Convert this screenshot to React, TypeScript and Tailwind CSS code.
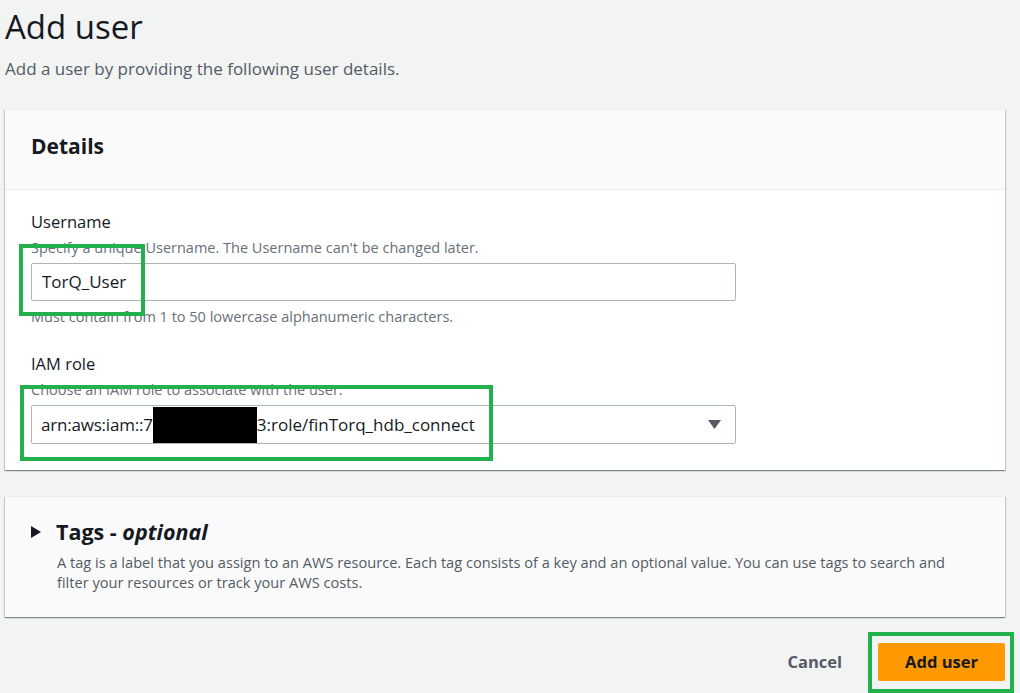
import React from "react";

const font = { fontFamily: '"Open Sans", "Noto Sans", Arial, sans-serif' };

export default function App() {
  return (
    <div
      className="relative w-[1020px] h-[693px] overflow-hidden bg-[#f2f3f3] text-[#16191f]"
      style={font}
    >
      <div className="pl-[5px] pr-[15px]">
        <h1 className="pt-[6px] text-[33px] leading-[42px] font-normal text-[#16191f]">Add user</h1>
        <p className="mt-[10px] text-[17px] leading-[22px] text-[#545b64]">
          Add a user by providing the following user details.
        </p>

        {/* Details card */}
        <div className="mt-[29px] bg-white border-t border-[#eaeded] shadow-[0_1px_1px_0_rgba(0,28,36,0.3),1px_1px_1px_0_rgba(0,28,36,0.15),-1px_1px_1px_0_rgba(0,28,36,0.15)]">
          <div className="h-[80px] bg-[#fafafa] border-b border-[#eaeded] flex items-center px-[26px] pb-[7px]">
            <h2 className="text-[21px] font-bold leading-[30px]">Details</h2>
          </div>
          <div className="px-[26px] pt-[21px] pb-[26px]">
            <div className="text-[16.5px] leading-[22px]">Username</div>
            <div className="mt-[5px] text-[14.5px] leading-[20px] text-[#687078]">
              Specify a unique Username. The Username can't be changed later.
            </div>
            <div className="mt-[5px] w-[705px] h-[38px] border border-[#aab7b8] rounded-[2px] flex items-center px-[10px] text-[17px]">
              TorQ_User
            </div>
            <div className="mt-[6px] text-[14.5px] leading-[20px] text-[#687078]">
              Must contain from 1 to 50 lowercase alphanumeric characters.
            </div>
            <div className="mt-[26px] text-[16.5px] leading-[22px]">IAM role</div>
            <div className="mt-[5px] text-[14.5px] leading-[20px] text-[#687078]">
              Choose an IAM role to associate with the user.
            </div>
            <div className="mt-[5px] w-[705px] h-[39px] border border-[#aab7b8] rounded-[2px] flex items-center pl-[9px] pr-[14px] text-[17px]">
              <span className="tracking-[-0.2px]">arn:aws:iam::7</span>
              <span className="inline-block w-[104px] h-[36px] bg-black" />
              <span>3:role/finTorq_hdb_connect</span>
              <span className="ml-auto">
                <svg width="13" height="10" viewBox="0 0 13 10">
                  <path d="M0 0 H13 L6.5 9 Z" fill="#545b64" />
                </svg>
              </span>
            </div>
          </div>
        </div>

        {/* Tags card */}
        <div className="mt-[26px] bg-[#fafafa] border-t border-[#eaeded] shadow-[0_1px_1px_0_rgba(0,28,36,0.3),1px_1px_1px_0_rgba(0,28,36,0.15),-1px_1px_1px_0_rgba(0,28,36,0.15)] pl-[26px] pr-[26px] pt-[20px] pb-[25px]">
          <div className="flex items-center">
            <svg width="10" height="12" viewBox="0 0 10 12" className="mr-[15px]">
              <path d="M0 0 L10 6 L0 12 Z" fill="#16191f" />
            </svg>
            <h2 className="text-[21.5px] font-bold leading-[30px]">
              Tags - <i>optional</i>
            </h2>
          </div>
          <p className="mt-[5px] pl-[26px] text-[14.6px] leading-[20px] text-[#545b64]">
            A tag is a label that you assign to an AWS resource. Each tag consists of a key and an optional value. You can use tags to search and filter your resources or track your AWS costs.
          </p>
        </div>

        {/* Actions */}
        <div className="mt-[26px] flex justify-end items-center">
          <button className="mr-[36px] text-[16.5px] font-bold text-[#545b64]">Cancel</button>
          <button className="w-[127px] h-[38px] bg-[#ff9900] rounded-[2px] text-[16.5px] font-bold text-[#16191f]">
            Add user
          </button>
        </div>
      </div>

      {/* Annotation boxes */}
      <div className="absolute left-[19px] top-[244px] w-[126px] h-[72px] border-[4px] border-[#22b14c]" />
      <div className="absolute left-[20px] top-[385px] w-[473px] h-[76px] border-[4px] border-[#22b14c]" />
      <div className="absolute left-[868px] top-[632px] w-[146px] h-[61px] border-[4px] border-[#22b14c]" />
    </div>
  );
}
